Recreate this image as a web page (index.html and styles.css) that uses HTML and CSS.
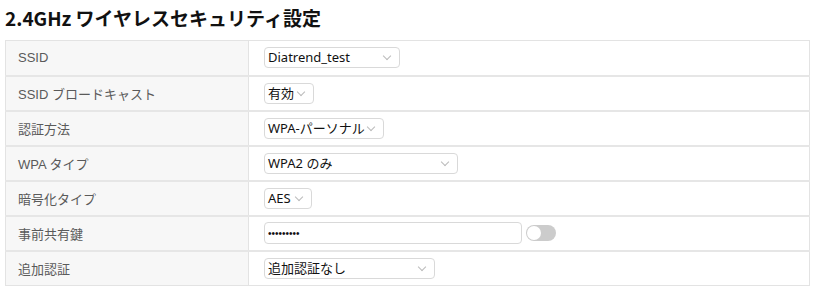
FILE: index.html
```html
<!DOCTYPE html>
<html lang="ja">
<head>
    <meta charset="UTF-8">
    <meta name="viewport" content="width=device-width, initial-scale=1.0">
    <title>2.4GHz ワイヤレスセキュリティ設定</title>
    <link rel="stylesheet" href="styles.css">
</head>
<body>
    <!-- 見出し -->
    <h2 class="page-title">2.4GHz ワイヤレスセキュリティ設定</h2>

    <!-- 設定テーブル -->
    <table class="settings">
        <tr>
            <th>SSID</th>
            <td>
                <div class="select w136">Diatrend_test</div>
            </td>
        </tr>
        <tr>
            <th>SSID ブロードキャスト</th>
            <td>
                <div class="select w50">有効</div>
            </td>
        </tr>
        <tr>
            <th>認証方法</th>
            <td>
                <div class="select w120">WPA-パーソナル</div>
            </td>
        </tr>
        <tr>
            <th>WPA タイプ</th>
            <td>
                <div class="select w194">WPA2 のみ</div>
            </td>
        </tr>
        <tr>
            <th>暗号化タイプ</th>
            <td>
                <div class="select w48">AES</div>
            </td>
        </tr>
        <tr>
            <th>事前共有鍵</th>
            <td>
                <div class="key-row">
                    <input type="password" class="key-input" value="123456789">
                    <span class="toggle"><span class="knob"></span></span>
                </div>
            </td>
        </tr>
        <tr>
            <th>追加認証</th>
            <td>
                <div class="select w171">追加認証なし</div>
            </td>
        </tr>
    </table>
</body>
</html>
```

FILE: styles.css
```css
/* Общие стили */
body {
    margin: 0;
    padding: 5px 5px 0;
    font-family: "Noto Sans", "Noto Sans CJK JP", sans-serif;
    background-color: #ffffff;
    color: #222;
}
.page-title {
    font-family: "Noto Sans CJK JP", sans-serif;
    font-size: 19px;
    font-weight: bold;
    line-height: 26px;
    margin: 0 0 9px;
    color: #111;
}
/* Таблица настроек */
.settings {
    width: 805px;
    border-collapse: collapse;
    border: 1px solid #e3e3e3;
}
.settings tr {
    height: 35px;
    border-bottom: 2px solid #e6e6e6;
}
.settings tr:last-child {
    border-bottom: 1px solid #e3e3e3;
}
.settings th {
    width: 230px;
    padding: 0 0 0 12px;
    text-align: left;
    font-family: "Liberation Sans", "Noto Sans CJK JP", sans-serif;
    font-size: 13px;
    font-weight: normal;
    color: #5a5a5a;
    background-color: #f7f7f7;
    border-right: 1px solid #e3e3e3;
}
.settings td {
    padding: 0 0 0 15px;
}
/* Выпадающие списки */
.select {
    position: relative;
    box-sizing: border-box;
    height: 21px;
    padding: 0 0 0 3px;
    border: 1px solid #d9d9d9;
    border-radius: 4px;
    font-size: 13px;
    line-height: 19px;
    color: #111;
    font-family: "Noto Sans", "Noto Sans CJK JP", sans-serif;
}
.select::after {
    content: "";
    position: absolute;
    right: 9px;
    top: 5px;
    width: 5px;
    height: 5px;
    border-right: 1px solid #bbb;
    border-bottom: 1px solid #bbb;
    transform: rotate(45deg);
}
.w136 { width: 136px; }
.w50 { width: 50px; }
.w120 { width: 120px; }
.w194 { width: 194px; }
.w48 { width: 48px; }
.w171 { width: 171px; }
/* Ключ */
.key-row {
    display: flex;
    align-items: center;
    gap: 4px;
}
.key-input {
    box-sizing: border-box;
    width: 258px;
    height: 22px;
    padding: 0 3px;
    border: 1px solid #d9d9d9;
    border-radius: 4px;
    font-size: 10px;
    color: #111;
    outline: none;
}
.toggle {
    position: relative;
    width: 30px;
    height: 16px;
    border-radius: 8px;
    background-color: #cccccc;
}
.knob {
    position: absolute;
    left: 1px;
    top: 1px;
    width: 14px;
    height: 14px;
    border-radius: 50%;
    background-color: #ffffff;
}
```
